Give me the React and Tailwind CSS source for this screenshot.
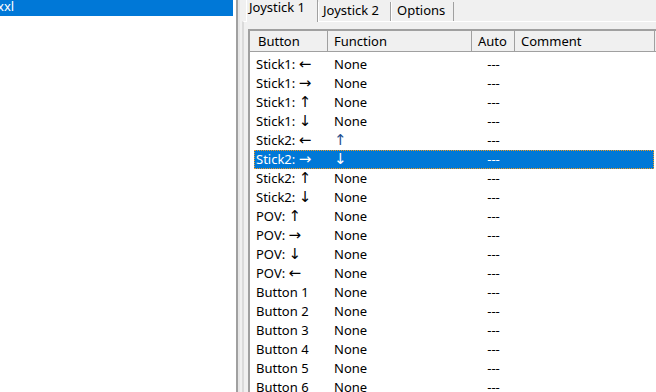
import React from 'react';

const rows = [
  { label: 'Stick1:', dir: '←', fn: 'None' },
  { label: 'Stick1:', dir: '→', fn: 'None' },
  { label: 'Stick1:', dir: '↑', fn: 'None' },
  { label: 'Stick1:', dir: '↓', fn: 'None' },
  { label: 'Stick2:', dir: '←', fn: '↑', arrow: true },
  { label: 'Stick2:', dir: '→', fn: '↓', arrow: true, selected: true },
  { label: 'Stick2:', dir: '↑', fn: 'None' },
  { label: 'Stick2:', dir: '↓', fn: 'None' },
  { label: 'POV:', dir: '↑', fn: 'None' },
  { label: 'POV:', dir: '→', fn: 'None' },
  { label: 'POV:', dir: '↓', fn: 'None' },
  { label: 'POV:', dir: '←', fn: 'None' },
  { label: 'Button 1', fn: 'None' },
  { label: 'Button 2', fn: 'None' },
  { label: 'Button 3', fn: 'None' },
  { label: 'Button 4', fn: 'None' },
  { label: 'Button 5', fn: 'None' },
  { label: 'Button 6', fn: 'None' },
  { label: 'Button 7', fn: 'None' },
];

const Arrow = ({ children, className = '' }) => (
  <span className={`font-['DejaVu_Sans',sans-serif] text-[15px] leading-[19px] ${className}`}>{children}</span>
);

const App = () => {
  return (
    <div className="w-[656px] h-[392px] flex overflow-hidden bg-[#f0f0f0] font-['Noto_Sans',sans-serif] text-[13px] text-black">
      {/* Left list */}
      <div className="w-[238px] shrink-0 bg-white border-r-2 border-[#a0a0a0] overflow-hidden">
        <div className="w-[233px] h-[16px] bg-[#0078d7] text-white leading-[12px] whitespace-nowrap overflow-hidden">
          <span className="-ml-[3px] inline-block">xxl</span>
        </div>
      </div>

      {/* Tab control */}
      <div className="flex-1 min-w-0 flex flex-col pl-[2px] border-l-2 border-[#e6e6e6]">
        <div className="flex h-[21px] pl-[4px] shrink-0 whitespace-nowrap">
          <div className="relative z-10 w-[72px] h-[22px] bg-[#f0f0f0] border-l border-white border-r border-r-[#a0a0a0] pl-[2px] leading-[14px]">
            Joystick 1
          </div>
          <div className="w-[73px] h-[19px] mt-[2px] border-l border-white border-r border-r-[#a0a0a0] pl-[4px] leading-[16px]">
            Joystick 2
          </div>
          <div className="w-[63px] h-[19px] mt-[2px] border-l border-white border-r border-r-[#a0a0a0] pl-[5px] leading-[16px]">
            Options
          </div>
        </div>

        <div className="flex-1 min-h-0 flex flex-col border-t border-white border-l-2 border-l-[#dadada] pl-[4px] pt-[7px]">
          <div className="flex-1 min-h-0 w-[420px] bg-white border-l-2 border-t-2 border-[#a0a0a0] overflow-hidden">
            {/* Header */}
            <div className="flex h-[21px] bg-[#f0f0f0] border-b border-[#a0a0a0] leading-[21px] whitespace-nowrap">
              <div className="w-[78px] pl-[8px] border-r border-[#a0a0a0]">Button</div>
              <div className="w-[144px] pl-[6px] border-r border-[#a0a0a0]">Function</div>
              <div className="w-[43px] pl-[6px] border-r border-[#a0a0a0]">Auto</div>
              <div className="w-[140px] pl-[6px] border-r border-[#a0a0a0]">Comment</div>
            </div>

            {/* Rows */}
            <div className="pt-[3px] pl-[4px]">
              {rows.map((row, i) => (
                <div
                  key={i}
                  className={`flex w-[400px] h-[19px] leading-[19px] whitespace-nowrap overflow-hidden ${
                    row.selected
                      ? 'bg-[#0078d7] text-white outline-1 outline-dotted outline-[#f39a1e] -outline-offset-1'
                      : ''
                  }`}
                >
                  <div className="w-[74px] pl-[2px]">
                    {row.label}
                    {row.dir && (
                      <>
                        {' '}
                        <Arrow>{row.dir}</Arrow>
                      </>
                    )}
                  </div>
                  <div className="w-[144px] pl-[6px]">
                    {row.arrow ? (
                      <Arrow className={row.selected ? '' : 'text-[#1f4f8f]'}>{row.fn}</Arrow>
                    ) : (
                      row.fn
                    )}
                  </div>
                  <div className="w-[43px] text-center">---</div>
                  <div className="flex-1" />
                </div>
              ))}
            </div>
          </div>
        </div>
      </div>
    </div>
  );
};

export default App;
